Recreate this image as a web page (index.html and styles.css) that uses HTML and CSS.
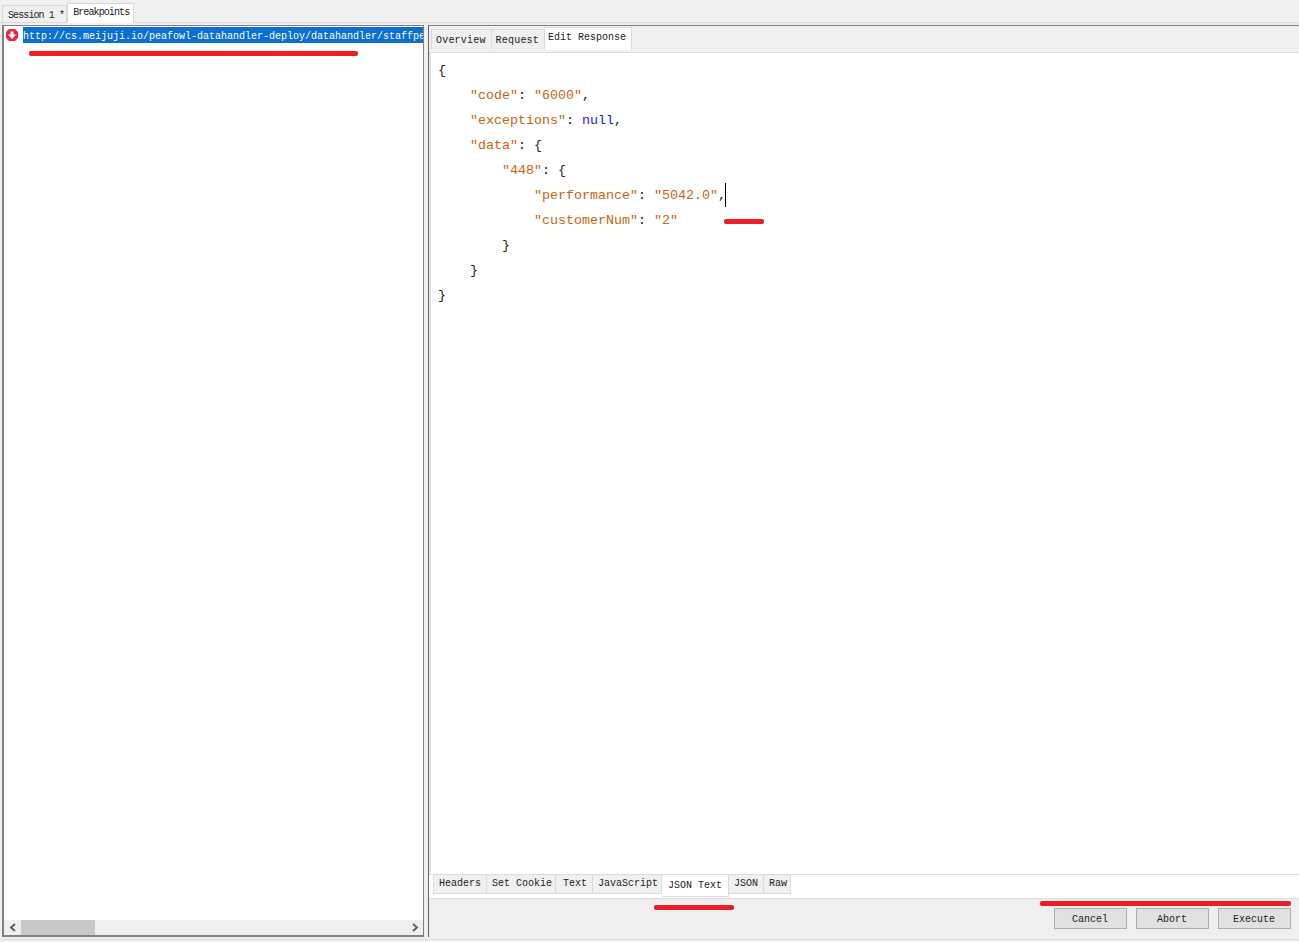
FILE: index.html
```html
<!DOCTYPE html>
<html lang="en">
<head>
    <meta charset="UTF-8">
    <meta name="viewport" content="width=device-width, initial-scale=1.0">
    <title>Breakpoints</title>
    <link rel="stylesheet" href="styles.css">
</head>
<body>
    <div class="topbar">
        <div class="toptab">Session 1 *</div>
        <div class="toptab active">Breakpoints</div>
    </div>
    <div class="main">
        <div class="left">
            <div class="list">
                <div class="row">
                    <svg class="bp-icon" width="14" height="14" viewBox="0 0 14 14">
                        <path d="M4 1h6l3 3v6l-3 3H4l-3-3V4z" fill="#e8264a"/>
                        <path d="M5.5 3.5h3v3H11L7 11 3 6.5h2.5z" fill="#fff"/>
                    </svg>
                    <div class="url">http://cs.meijuji.io/peafowl-datahandler-deploy/datahandler/staffperformance</div>
                </div>
            </div>
            <div class="hscroll">
                <span class="arrow">
                    <svg width="8" height="9" viewBox="0 0 8 9"><path d="M6 1L2 4.5 6 8" fill="none" stroke="#606060" stroke-width="2"/></svg>
                </span>
                <div class="thumb"></div>
                <div class="track"></div>
                <span class="arrow">
                    <svg width="8" height="9" viewBox="0 0 8 9"><path d="M2 1l4 3.5L2 8" fill="none" stroke="#606060" stroke-width="2"/></svg>
                </span>
            </div>
        </div>
        <div class="right">
            <div class="tabs">
                <div class="tab">Overview</div>
                <div class="tab">Request</div>
                <div class="tab active">Edit Response</div>
            </div>
            <div class="editor">
                <pre class="code"><span class="p">{</span>
    <span class="s">"code"</span><span class="p">: </span><span class="s">"6000"</span><span class="p">,</span>
    <span class="s">"exceptions"</span><span class="p">: </span><span class="n">null</span><span class="p">,</span>
    <span class="s">"data"</span><span class="p">: {</span>
        <span class="s">"448"</span><span class="p">: {</span>
            <span class="s">"performance"</span><span class="p">: </span><span class="s">"5042.0"</span><span class="p">,</span><span class="caret"></span>
            <span class="s">"customerNum"</span><span class="p">: </span><span class="s">"2"</span>
        <span class="p">}</span>
    <span class="p">}</span>
<span class="p">}</span></pre>
            </div>
            <div class="subtabs">
                <div class="subtab">Headers</div>
                <div class="subtab">Set Cookie</div>
                <div class="subtab wide">Text</div>
                <div class="subtab">JavaScript</div>
                <div class="subtab active">JSON Text</div>
                <div class="subtab json">JSON</div>
                <div class="subtab">Raw</div>
            </div>
            <div class="actions">
                <button class="btn">Cancel</button>
                <button class="btn">Abort</button>
                <button class="btn">Execute</button>
            </div>
        </div>
    </div>
    <div class="statusline"></div>
    <div class="mark m1"></div>
    <div class="mark m2"></div>
    <div class="mark m3"></div>
    <div class="mark m4"></div>
</body>
</html>
```

FILE: styles.css
```css
html, body { height: 100%; }
body { margin: 0; height: 942px; overflow: hidden; background: #f0f0f0; color: #222; font-family: "Liberation Mono", "Noto Sans CJK SC", monospace; font-size: 10px; display: flex; flex-direction: column; }

.topbar { height: 22px; flex: none; display: flex; align-items: flex-end; padding-left: 2px; border-bottom: 1px solid #d9d9d9; }
.toptab { height: 16px; line-height: 19px; padding: 0 2px 0 5px; background: #f0f0f0; border: 1px solid #d9d9d9; border-bottom: none; letter-spacing: -0.9px; }
.toptab.active { height: 19px; line-height: 18px; padding: 0 4px 0 5px; background: #fff; margin-bottom: -1px; }

.main { height: 912px; flex: none; margin-top: 2px; padding-left: 2px; display: flex; }
.left { width: 419px; flex: none; display: flex; flex-direction: column; border: 2px solid #808080; border-width: 1px 1px 2px 2px; background: #fff; }
.list { flex: 1; overflow: hidden; padding-top: 1px; }
.row { display: flex; align-items: center; height: 16px; }
.bp-icon { flex: none; margin: 0 4px 0 1px; }
.url { flex: 1; min-width: 0; height: 16px; line-height: 19px; overflow: hidden; white-space: nowrap; background: #0a6fd0; color: #fff; font-size: 10px; }
.hscroll { height: 15px; flex: none; display: flex; align-items: center; background: #efefef; }
.arrow { width: 17px; display: flex; justify-content: center; }
.thumb { width: 74px; height: 15px; background: #c8c8c8; }
.track { flex: 1; }

.right { flex: 1; min-width: 0; margin-left: 4px; display: flex; flex-direction: column; border-left: 1px solid #666; border-top: 1px solid #808080; }
.tabs { height: 23px; flex: none; display: flex; align-items: flex-end; padding: 0 0 3px 2px; background: #f0f0f0; border-bottom: 1px solid #dcdcdc; }
.tab { height: 19px; line-height: 22px; padding: 0 5px 0 4px; border: 1px solid #dcdcdc; border-bottom: none; border-left: none; font-size: 10px; letter-spacing: 0.2px; }
.tab:first-child { border-left: 1px solid #dcdcdc; }
.tab.active { height: 22px; line-height: 20px; padding: 0 5px 0 3px; background: #fff; margin-bottom: -1px; letter-spacing: 0; }

.editor { flex: 1; min-height: 0; background: #fff; padding: 5px 0 0 7px; border-left: 2px solid #e4e4e4; }
.code { margin: 0; font-family: "Liberation Mono", "Noto Sans CJK SC", monospace; font-size: 13.33px; line-height: 25px; }
.code .p { color: #222; }
.code .s { color: #c8650f; }
.code .n { color: #2222dd; }
.caret { display: inline-block; width: 1px; height: 24px; margin-left: -1px; background: #000; vertical-align: middle; }

.subtabs { height: 23px; flex: none; display: flex; align-items: flex-start; padding-left: 4px; background: #fff; border-top: 1px solid #dcdcdc; border-bottom: 1px solid #dcdcdc; }
.subtab { height: 18px; line-height: 18px; padding: 0 3px 0 5px; background: #f0f0f0; border: 1px solid #dcdcdc; border-top: none; border-left: none; }
.subtab:first-child { border-left: 1px solid #dcdcdc; padding-right: 5px; }
.subtab.wide { padding: 0 5px 0 7px; }
.subtab.json { padding-right: 5px; }
.subtab.active { height: 21px; line-height: 22px; padding: 0 6px 0 6px; background: #fff; }

.actions { height: 30px; flex: none; display: flex; justify-content: flex-end; align-items: flex-end; gap: 9px; padding: 0 8px 8px 0; background: #efefef; }
.btn { width: 73px; height: 21px; padding: 2px 1px 0 0; background: #e1e1e1; border: 1px solid #adadad; color: #222; font-family: "Liberation Mono", "Noto Sans CJK SC", monospace; font-size: 10px; }

.statusline { margin-top: 2px; border-top: 1px solid #dcdcdc; }

/* red annotations drawn over the screenshot */
.mark { position: absolute; height: 5px; background: #ee1c25; border-radius: 2px; }
.m1 { left: 29px; top: 51px; width: 329px; }
.m2 { left: 724px; top: 219px; width: 40px; }
.m3 { left: 654px; top: 905px; width: 80px; }
.m4 { left: 1040px; top: 901px; width: 251px; }
```
